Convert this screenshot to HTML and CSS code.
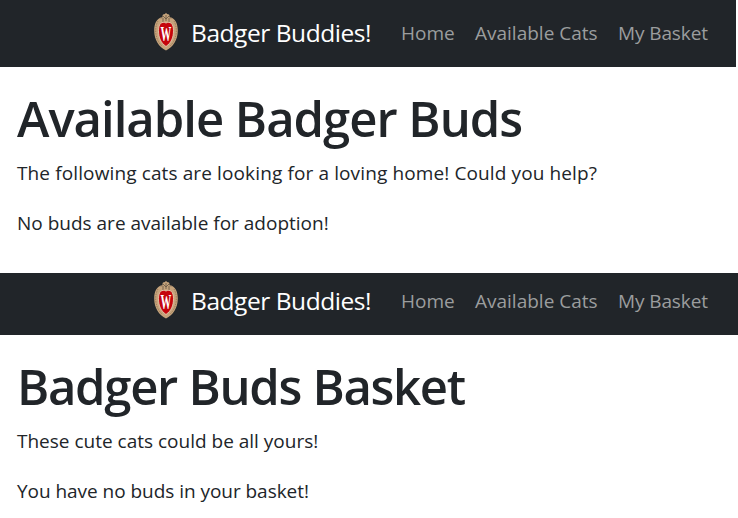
FILE: index.html
```html
<!DOCTYPE html>
<html lang="en">
<head>
<meta charset="utf-8">
<title>Badger Buddies</title>
<link rel="stylesheet" href="styles.css">
</head>
<body>
<svg class="defs" width="0" height="0" aria-hidden="true">
  <symbol id="crest" viewBox="0 0 26 40">
    <path d="M9 5 10 2.500 12 2 13 .8 14 2 16 2.500 17 5C22 6.500 24.800 11 24.800 18.500 24.800 28 20 35 13 38.500 6 35 1.200 28 1.200 18.500 1.200 11 4 6.500 9 5Z" fill="#c6a47c"/>
    <path d="M8 6.500 10 4 13 7 16 4 18 6.500M10 10V6M13 9V3M16 10V6" fill="none" stroke="#655443" stroke-width=".8"/>
    <path d="M5 9C1 16 2 28 9 34M21 9C25 16 24 28 17 34" fill="none" stroke="#91714f" stroke-width=".8" stroke-dasharray="1.500 1"/>
    <path d="M13 11C17 9 20.500 11.500 20.500 18.500 20.500 26 18 31 13 34.500 8 31 5.500 26 5.500 18.500 5.500 11.500 9 9 13 11Z" fill="#c5050c" stroke="#ead8bd" stroke-width=".8"/>
    <g transform="translate(13 28.800) scale(.54 1)"><text class="crest-letter" text-anchor="middle">W</text></g>
  </symbol>
</svg>
<section class="page page-cats">
  <nav class="navbar">
    <svg class="logo"><use href="#crest"/></svg>
    <span class="brand">Badger Buddies!</span>
    <a class="link home">Home</a><a class="link cats">Available Cats</a><a class="link basket">My Basket</a>
  </nav>
  <main class="content">
    <h1 class="title-cats">Available Badger Buds</h1>
    <p class="lead-cats">The following cats are looking for a loving home! Could you help?</p>
    <p class="empty-cats">No buds are available for adoption!</p>
  </main>
</section>
<section class="page page-basket">
  <nav class="navbar">
    <svg class="logo"><use href="#crest"/></svg>
    <span class="brand">Badger Buddies!</span>
    <a class="link home">Home</a><a class="link cats">Available Cats</a><a class="link basket">My Basket</a>
  </nav>
  <main class="content">
    <h1 class="title-basket">Badger Buds Basket</h1>
    <p class="lead-basket">These cute cats could be all yours!</p>
    <p class="empty-basket">You have no buds in your basket!</p>
  </main>
</section>
</body>
</html>
```
FILE: styles.css
```css
* { box-sizing: border-box; }
body {
  margin: 0;
  background: #fff;
  color: #212529;
  font-family: "Open Sans", "Noto Sans", sans-serif;
  font-size: 19px;
  overflow: hidden;
}
.defs { display: none; }
.page-cats { height: 273px; }
.page-basket { height: 245px; }
.navbar {
  display: flex;
  align-items: center;
  height: 67px;
  padding: 0 0 3px 153px;
  background: #212529;
  white-space: nowrap;
}
.page-cats .navbar { width: 736px; }
.page-basket .navbar { height: 62px; padding-bottom: 8px; }
.logo { width: 26px; height: 40px; flex: none; }
.crest-letter { font: bold 20px "Liberation Serif", serif; fill: #fff; }
.brand {
  width: 210px;
  margin-left: 12px;
  flex: none;
  color: #fff;
  font-size: 24.500px;
  letter-spacing: -.45px;
}
.link { color: #9b9d9e; flex: none; padding-top: 2px; }
.home { width: 74px; }
.cats { width: 143px; }
.basket { letter-spacing: -.1px; }
.content { padding: 19px 17px 0; white-space: nowrap; }
h1 { margin: 0; height: 72px; line-height: 64px; font-size: 49px; font-weight: 570; }
.title-cats { letter-spacing: -1px; }
.title-basket { letter-spacing: -1.3px; }
p { margin: 0 0 20px; line-height: 30px; }
p:last-child { margin-bottom: 0; }
.lead-cats { letter-spacing: .12px; }
.empty-basket { letter-spacing: -.04px; }
```
